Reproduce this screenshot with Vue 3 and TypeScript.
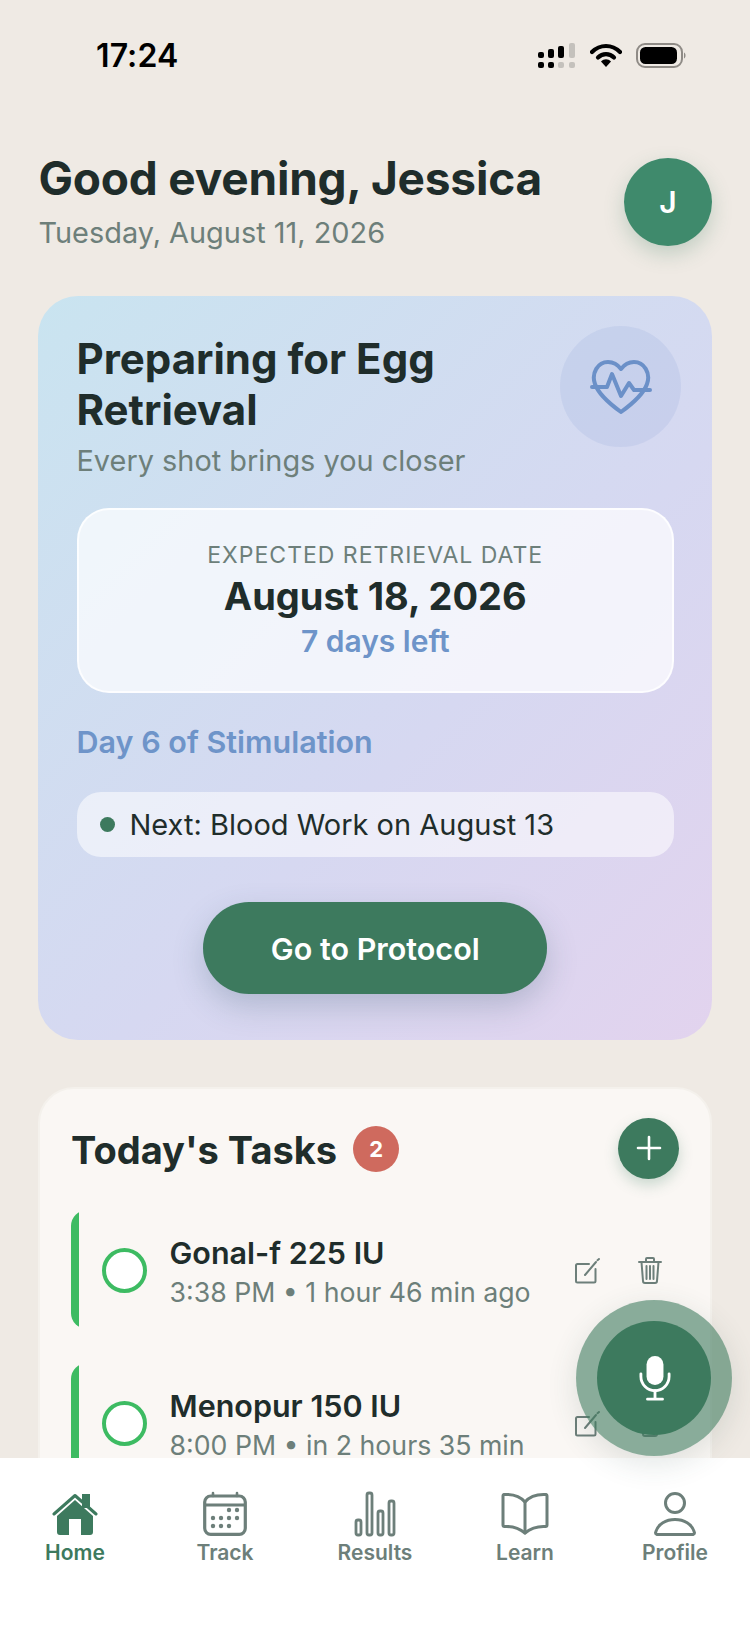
<script setup lang="ts">
interface Task { name: string; sub: string }
const tasks: Task[] = [
  { name: 'Gonal-f 225 IU', sub: '3:38 PM • 1 hour 46 min ago' },
  { name: 'Menopur 150 IU', sub: '8:00 PM • in 2 hours 35 min' },
]
const calDots: [number, number][] = [
  [26, 17], [34, 17],
  [10, 25], [18, 25], [26, 25], [34, 25],
  [10, 33], [18, 33], [26, 33],
]
const bars: [number, number, number][] = [
  [2, 29, 15], [13, 2, 42], [24, 20, 24], [35, 10, 34],
]
</script>

<template>
  <div class="screen">
    <div class="scroll">
      <div class="status">
        <span class="time">17:24</span>
        <div class="status-icons">
          <svg width="38" height="26" viewBox="0 0 38 26" class="sig">
            <rect x="0" y="9" width="6" height="6" rx="2" fill="#000" />
            <rect x="10" y="6" width="6" height="9" rx="2" fill="#000" />
            <rect x="20" y="3" width="6" height="12" rx="2" fill="#000" />
            <rect x="31" y="0" width="6" height="15" rx="2" fill="#c4c1bc" />
            <rect x="0" y="19" width="6" height="6" rx="2" fill="#000" />
            <rect x="10" y="19" width="6" height="6" rx="2" fill="#000" />
            <rect x="20" y="19" width="6" height="6" rx="2" fill="#c4c1bc" />
            <rect x="31" y="19" width="6" height="6" rx="2" fill="#c4c1bc" />
          </svg>
          <svg width="32" height="24" viewBox="0 0 32 24" class="wifi">
            <path d="M2 9 C10 1 22 1 30 9" fill="none" stroke="#000" stroke-width="4.2" stroke-linecap="round" />
            <path d="M8 14.5 C12.5 10 19.5 10 24 14.5" fill="none" stroke="#000" stroke-width="4.2" stroke-linecap="round" />
            <path d="M11 18.5 C14 15.5 18 15.5 21 18.5 L16 24 Z" fill="#000" />
          </svg>
          <svg width="50" height="26" viewBox="0 0 50 26" class="batt">
            <rect x="1" y="1" width="45" height="23" rx="8" fill="none" stroke="#8f8b86" stroke-width="2" />
            <rect x="4" y="4" width="37" height="17" rx="5.5" fill="#000" />
            <path d="M48 9.5 C50 10.5 50 14.5 48 15.5 Z" fill="#8f8b86" />
          </svg>
        </div>
      </div>

      <header class="head">
        <div class="head-text">
          <h1 class="greet">Good evening, Jessica</h1>
          <p class="date">Tuesday, August 11, 2026</p>
        </div>
        <div class="avatar">J</div>
      </header>

      <section class="hero">
        <div class="hero-top">
          <div>
            <h2 class="hero-title">Preparing for Egg Retrieval</h2>
            <p class="hero-sub">Every shot brings you closer</p>
          </div>
          <div class="hero-icon">
            <svg width="62" height="54" viewBox="0 0 62 54" fill="none" stroke="#6b90c8" stroke-width="4" stroke-linecap="round" stroke-linejoin="round">
              <path d="M5 24 C1 13 8 2 18 2 C24 2 28 5 31 9 C34 5 38 2 44 2 C54 2 61 13 57 24 C54 33 42 44 31 52 C20 44 8 33 5 24 Z" />
              <path d="M2 27 H17 L22 14 L31 36 L39 23 L44 30 H60" />
            </svg>
          </div>
        </div>
        <div class="date-box">
          <div class="db-label">EXPECTED RETRIEVAL DATE</div>
          <div class="db-date">August 18, 2026</div>
          <div class="db-left">7 days left</div>
        </div>
        <div class="day">Day 6 of Stimulation</div>
        <div class="next"><span class="dot"></span>Next: Blood Work on August 13</div>
        <button class="go">Go to Protocol</button>
      </section>

      <section class="tasks">
        <div class="tasks-head">
          <div class="tasks-title">
            <h3>Today's Tasks</h3>
            <span class="badge">2</span>
          </div>
          <div class="add">
            <svg width="26" height="26" viewBox="0 0 26 26" stroke="#fff" stroke-width="2.6" stroke-linecap="round"><path d="M13 2 V24 M2 13 H24" /></svg>
          </div>
        </div>
        <div v-for="t in tasks" :key="t.name" class="task">
          <span class="bar"></span>
          <span class="check"></span>
          <div class="task-text">
            <div class="task-name">{{ t.name }}</div>
            <div class="task-sub">{{ t.sub }}</div>
          </div>
          <div class="task-actions">
            <svg width="26" height="26" viewBox="0 0 26 26" fill="none" stroke="#6d7f7a" stroke-width="2" stroke-linecap="round" stroke-linejoin="round">
              <path d="M15 6 H3.5 A1.5 1.5 0 0 0 2 7.500 V23 A1.500 1.500 0 0 0 3.500 24.500 H20 A1.500 1.500 0 0 0 21.500 23 V11" />
              <path d="M11 17 L22 4" /><path d="M23.500 2.200 L25 1" />
            </svg>
            <svg width="24" height="27" viewBox="0 0 24 27" fill="none" stroke="#6d7f7a" stroke-width="2" stroke-linecap="round" stroke-linejoin="round">
              <path d="M1 5 H23 M8 5 V2 A1 1 0 0 1 9 1 H15 A1 1 0 0 1 16 2 V5" />
              <path d="M3.500 5 L5 24 A2 2 0 0 0 7 26 H17 A2 2 0 0 0 19 24 L20.500 5" />
              <path d="M8.500 9 V22 M12 9 V22 M15.500 9 V22" />
            </svg>
          </div>
        </div>
      </section>
    </div>

    <nav class="nav">
      <div class="nav-item active">
        <svg width="46" height="44" viewBox="0 0 46 44">
          <rect x="30" y="2" width="8" height="14" fill="#3d7a5e" />
          <path d="M5 24 L23 8 L41 24 V40 A3 3 0 0 1 38 43 H29 V27 H17 V43 H8 A3 3 0 0 1 5 40 Z" fill="#3d7a5e" />
          <path d="M2 22 L23 3.500 L44 22" fill="none" stroke="#3d7a5e" stroke-width="3" stroke-linecap="round" stroke-linejoin="round" />
        </svg>
        <span>Home</span>
      </div>
      <div class="nav-item">
        <svg width="44" height="44" viewBox="0 0 44 44" fill="none" stroke="#6d7f7a">
          <rect x="1.700" y="4" width="40.600" height="38.300" rx="6" stroke-width="3.200" />
          <path d="M2 13 H42" stroke-width="3.200" />
          <path d="M10 1 V4 M34 1 V4" stroke-width="2.600" stroke-linecap="round" />
          <circle v-for="d in calDots" :key="d.join()" :cx="d[0]" :cy="d[1] + 1" r="2.200" fill="#6d7f7a" stroke="none" />
        </svg>
        <span>Track</span>
      </div>
      <div class="nav-item">
        <svg width="42" height="46" viewBox="0 0 42 46" fill="none" stroke="#6d7f7a" stroke-width="2.800">
          <rect v-for="b in bars" :key="b[0]" :x="b[0]" :y="b[1]" width="5" :height="b[2]" rx="2" />
        </svg>
        <span>Results</span>
      </div>
      <div class="nav-item">
        <svg width="48" height="44" viewBox="0 0 48 44" fill="none" stroke="#6d7f7a" stroke-width="3" stroke-linecap="round" stroke-linejoin="round">
          <path d="M24 10 C19 4 11 2 3 2.500 A1.500 1.500 0 0 0 2 4 V33 A1.500 1.500 0 0 0 3.500 34.500 C12 34 18 36 24 41 C30 36 36 34 44.500 34.500 A1.500 1.500 0 0 0 46 33 V4 A1.500 1.500 0 0 0 45 2.500 C37 2 29 4 24 10 Z" />
          <path d="M24 10 V41" />
        </svg>
        <span>Learn</span>
      </div>
      <div class="nav-item">
        <svg width="42" height="44" viewBox="0 0 42 44" fill="none" stroke="#6d7f7a" stroke-width="3" stroke-linejoin="round">
          <circle cx="21" cy="11" r="9.500" />
          <path d="M3 42.500 A2 2 0 0 1 1.700 40 C4 32 12 27.500 21 27.500 C30 27.500 38 32 40.300 40 A2 2 0 0 1 39 42.500 Z" />
        </svg>
        <span>Profile</span>
      </div>
    </nav>

    <div class="fab">
      <div class="fab-core">
        <svg width="32" height="47" viewBox="0 0 34 50" fill="none">
          <rect x="8" y="1" width="18" height="31" rx="9" fill="#fff" />
          <path d="M2 20 V23 A15 15 0 0 0 32 23 V20" stroke="#fff" stroke-width="3" stroke-linecap="round" />
          <path d="M17 38 V46 M9 47 H25" stroke="#fff" stroke-width="3" stroke-linecap="round" />
        </svg>
      </div>
    </div>
  </div>
</template>

<style>
html, body { margin: 0; background: #efeae4; }
</style>

<style scoped>
* { box-sizing: border-box; }
.screen {
  position: relative;
  width: 750px;
  height: 1626px;
  overflow: hidden;
  display: flex;
  flex-direction: column;
  background: #efeae4;
  font-family: Inter, "Liberation Sans", sans-serif;
  color: #1f2d2b;
}
.scroll { flex: 1; min-height: 0; overflow: hidden; padding: 0 38px; }
.status {
  height: 112px;
  display: flex;
  justify-content: space-between;
  padding: 43px 26px 0 58px;
}
.time { font-size: 32px; font-weight: 600; color: #000; line-height: 26px; letter-spacing: 0.1px; }
.status-icons { display: flex; align-items: flex-start; gap: 14px; }
.head {
  display: flex;
  justify-content: space-between;
  align-items: flex-start;
  height: 184px;
  padding-top: 40px;
}
.head-text { padding-left: 0.5px; }
.greet { margin: 0; font-size: 46px; line-height: 52px; font-weight: 700; letter-spacing: -0.2px; }
.date { margin: 11px 0 0; font-size: 28.900px; line-height: 36px; color: #6d7f7a; }
.avatar {
  width: 88px;
  height: 88px;
  margin-top: 6px;
  border-radius: 50%;
  background: #3f8a6c;
  color: #fff;
  font-size: 30px;
  font-weight: 600;
  display: flex;
  align-items: center;
  justify-content: center;
  box-shadow: 0 8px 20px rgba(61, 122, 94, 0.25);
}
.hero {
  height: 744px;
  border-radius: 40px;
  padding: 37px 38px 0 38.500px;
  background: linear-gradient(135deg, #c9e4f0 0%, #d6d8f1 58%, #e2d3ee 100%);
  display: flex;
  flex-direction: column;
}
.hero-top { display: flex; justify-content: space-between; height: 175px; }
.hero-title { margin: 0; width: 400px; font-size: 42px; line-height: 51px; font-weight: 700; }
.hero-sub { margin: 9px 0 0; font-size: 28.900px; line-height: 34px; color: #6d7f7a; }
.hero-icon {
  flex: none;
  width: 121px;
  height: 121px;
  margin: -7px -7px 0 0;
  border-radius: 50%;
  background: rgba(150, 170, 220, 0.2);
  display: flex;
  align-items: center;
  justify-content: center;
}
.date-box {
  height: 185px;
  border-radius: 32px;
  background: rgba(255, 255, 255, 0.7);
  border: 2px solid rgba(255, 255, 255, 0.8);
  display: flex;
  flex-direction: column;
  align-items: center;
  padding-top: 31px;
}
.db-label { font-size: 23px; line-height: 28px; letter-spacing: 1px; color: #6d7f7a; }
.db-date { font-size: 38px; line-height: 46px; font-weight: 700; margin-top: 4px; }
.db-left { font-size: 30px; line-height: 36px; font-weight: 600; color: #6e94c9; margin-top: 4px; }
.day { margin-top: 31px; font-size: 30.500px; line-height: 36px; font-weight: 600; color: #6e94c9; }
.next {
  margin-top: 32px;
  height: 65px;
  border-radius: 24px;
  background: rgba(255, 255, 255, 0.55);
  display: flex;
  align-items: center;
  gap: 15px;
  padding-left: 23px;
  font-size: 29px;
}
.dot { width: 15px; height: 15px; border-radius: 50%; background: #3d7a5e; }
.go {
  align-self: center;
  margin-top: 45px;
  width: 344px;
  height: 92px;
  flex: none;
  border: 0;
  border-radius: 46px;
  background: #3d7a5e;
  color: #fff;
  font-family: inherit;
  font-size: 30.500px;
  font-weight: 600;
  box-shadow: 0 12px 30px rgba(60, 90, 110, 0.25);
}
.tasks {
  margin-top: 47px;
  height: 500px;
  border-radius: 36px;
  background: #faf7f4;
  border: 2px solid #f4f1ec;
  padding: 29px 30px 0 31px;
}
.tasks-head { display: flex; justify-content: space-between; align-items: center; height: 62px; padding-right: 1px; }
.tasks-title { display: flex; align-items: center; gap: 16px; }
.tasks-title h3 { margin: 0; font-size: 38px; font-weight: 700; line-height: 46px; position: relative; top: 1px; }
.badge {
  width: 46px;
  height: 46px;
  border-radius: 50%;
  background: #cf6a5e;
  color: #fff;
  font-size: 22px;
  font-weight: 700;
  display: flex;
  align-items: center;
  justify-content: center;
}
.add {
  width: 61px;
  height: 61px;
  margin-top: -2px;
  border-radius: 50%;
  background: #3d7a5e;
  display: flex;
  align-items: center;
  justify-content: center;
  box-shadow: 0 6px 14px rgba(61, 122, 94, 0.25);
}
.task {
  height: 119px;
  margin-top: 30px;
  margin-bottom: 34px;
  border-radius: 16px;
  overflow: hidden;
  display: flex;
  align-items: center;
}
.task + .task { margin-top: 0; }
.bar { flex: none; width: 8px; align-self: stretch; background: #3dbb62; }
.check { flex: none; width: 45px; height: 45px; margin: 1px 0 0 22.500px; border-radius: 50%; border: 4px solid #3dbb62; background: #fff; }
.task-text { flex: 1; margin-left: 23px; padding-top: 3px; }
.task-name { font-size: 30.500px; line-height: 38px; font-weight: 600; }
.task-sub { font-size: 26.700px; line-height: 34px; color: #6d7f7a; margin-top: 3px; }
.task-actions { display: flex; align-items: center; gap: 38px; padding: 2px 18px 0 0; }
.nav {
  flex: none;
  height: 168px;
  background: #fff;
  display: grid;
  grid-template-columns: repeat(5, 150px);
  position: relative;
}
.nav-item {
  height: 100%;
  display: flex;
  flex-direction: column;
  align-items: center;
  padding-top: 33px;
  color: #6d7f7a;
  font-size: 21px;
  font-weight: 600;
  line-height: 32px;
}
.nav-item svg { height: 46px; flex: none; }
.nav-item.active { color: #3d7a5e; }
.fab {
  position: absolute;
  left: 576px;
  top: 1300px;
  width: 156px;
  height: 156px;
  border-radius: 50%;
  background: rgba(61, 122, 94, 0.6);
  display: flex;
  align-items: center;
  justify-content: center;
  box-shadow: 0 8px 30px rgba(50, 80, 70, 0.14);
}
.fab-core {
  width: 114px;
  height: 114px;
  border-radius: 50%;
  background: #3d7a5e;
  display: flex;
  align-items: center;
  justify-content: center;
}
.fab-core svg { margin-left: 2px; }
</style>
